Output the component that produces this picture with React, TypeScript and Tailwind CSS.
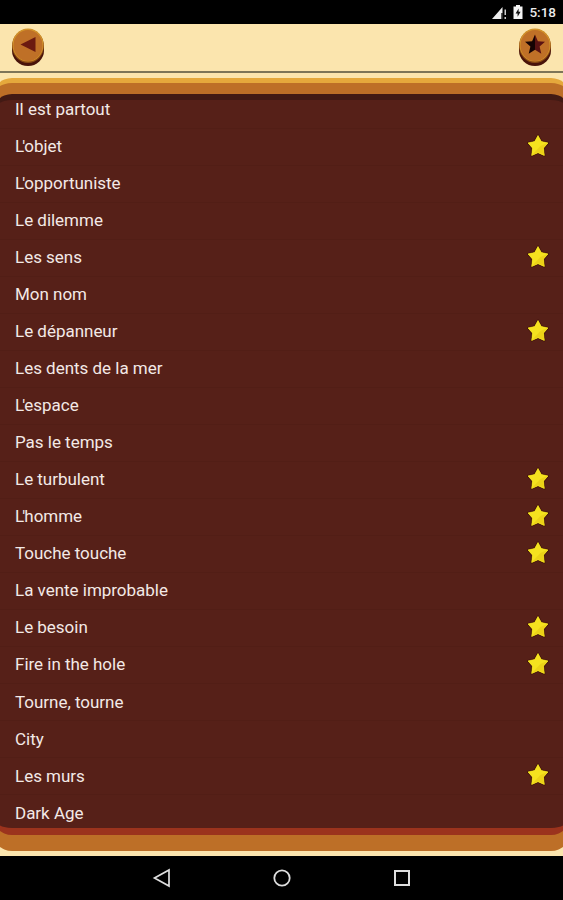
import { useState } from 'react'

type Level = { title: string; starred?: boolean }

const levels: Level[] = [
  { title: 'Il est partout' },
  { title: "L'objet", starred: true },
  { title: "L'opportuniste" },
  { title: 'Le dilemme' },
  { title: 'Les sens', starred: true },
  { title: 'Mon nom' },
  { title: 'Le dépanneur', starred: true },
  { title: 'Les dents de la mer' },
  { title: "L'espace" },
  { title: 'Pas le temps' },
  { title: 'Le turbulent', starred: true },
  { title: "L'homme", starred: true },
  { title: 'Touche touche', starred: true },
  { title: 'La vente improbable' },
  { title: 'Le besoin', starred: true },
  { title: 'Fire in the hole', starred: true },
  { title: 'Tourne, tourne' },
  { title: 'City' },
  { title: 'Les murs', starred: true },
  { title: 'Dark Age' },
]

function StatusBar() {
  return (
    <div className="flex h-[24px] shrink-0 items-center justify-end bg-black pr-[7px] text-[#ececec]">
      <svg width="15" height="13" viewBox="0 0 15 13" className="mt-[3px]">
        <path d="M10.500 0v6H9v6H0z" fill="#eee" />
        <path d="M10.500 6v6H9V6z" fill="#555" />
        <path d="M12.500 2.500H14v5.500h-1.500zM12.500 10H14v2h-1.500z" fill="#ccc" />
      </svg>
      <svg width="10" height="15" viewBox="0 0 10 15" className="ml-[6px]">
        <path d="M3 0h4v1.500h2.500V14H.5V1.500H3z" fill="#f4f4f4" />
        <path d="M5.600 3.500 2.600 8.400h2v3.300l3-5h-2z" fill="#111" />
      </svg>
      <span className="mt-[2px] ml-[6px] text-[13.5px] leading-none font-medium">5:18</span>
    </div>
  )
}

function CoinButton({ icon, onClick }: { icon: 'back' | 'star'; onClick?: () => void }) {
  return (
    <button onClick={onClick} aria-label={icon} className="h-[39px] w-[34px]">
      <svg width="34" height="39" viewBox="0 0 34 39">
        <path d="M1 17v5.500a16 15.500 0 0 0 32 0V17z" fill="#491309" />
        <ellipse cx="17" cy="18" rx="16" ry="17" fill="#8b4a14" />
        <ellipse cx="17" cy="17" rx="15.500" ry="16.500" fill="#d3932a" />
        <ellipse cx="17" cy="17.500" rx="14.500" ry="15.500" fill="#bf7027" />
        {icon === 'back' ? (
          <path d="M9.500 16.500 24.500 9v15z" fill="#6b1a10" />
        ) : (
          <>
            <path d="m17 6.500 2.900 6.700 7.100.6-5.400 4.700 1.700 7.200-6.300-3.900z" fill="#5a1212" />
            <path d="m17 6.500-2.900 6.700-7.100.6 5.400 4.700-1.700 7.200 6.300-3.900z" fill="#160303" />
          </>
        )}
      </svg>
    </button>
  )
}

function YellowStar() {
  return (
    <svg width="24" height="24" viewBox="0 0 24 24" className="-mt-[2px]">
      <path
        d="m12 1.500 3.300 6 6.700 1.400-4.500 5.200.8 7.400-6.300-2.800-6.300 2.800.8-7.400L2 8.900l6.700-1.400z"
        fill="#f5e21f"
        stroke="#3c0d08"
        strokeWidth="2"
        strokeLinejoin="round"
        paintOrder="stroke"
      />
      <path
        d="m12 1.500 3.300 6 6.700 1.400-4.500 5.200.8 7.400-6.300-2.800-6.300 2.800.8-7.400L2 8.900l6.700-1.400z"
        fill="#f5e21f"
        stroke="#f5e21f"
        strokeWidth="0.600"
        strokeLinejoin="round"
      />
      <path d="m6 21 6.200-2.800 6 2.800-.8-7 4-5-7 3z" fill="#e6c814" opacity="0.6" />
    </svg>
  )
}

// Pulls the apostrophe in close to the elided article
function Title({ text }: { text: string }) {
  if (!text.startsWith("L'")) return <span>{text}</span>
  return (
    <span>
      <span className="tracking-[-2px]">L</span>
      <span className="tracking-[-0.8px]">'</span>
      {text.slice(2)}
    </span>
  )
}

function NavBar() {
  return (
    <div className="flex h-[44px] shrink-0 items-center justify-center gap-[100px] bg-black">
      <svg width="20" height="20" viewBox="0 0 20 20" fill="none" stroke="#dedede" strokeWidth="1.700">
        <path d="M2.500 10 17 2v16z" />
      </svg>
      <svg width="20" height="20" viewBox="0 0 20 20" fill="none" stroke="#dedede" strokeWidth="1.800">
        <circle cx="10" cy="10" r="7.700" />
      </svg>
      <svg width="20" height="20" viewBox="0 0 20 20" fill="none" stroke="#dedede" strokeWidth="2">
        <path d="M3 3h14v14H3z" />
      </svg>
    </div>
  )
}

export default function App() {
  const [onlyStarred, setOnlyStarred] = useState(false)
  const shown = onlyStarred ? levels.filter(level => level.starred) : levels

  return (
    <div className="flex h-[900px] w-[563px] flex-col overflow-hidden bg-[#fbe5ae] font-['Roboto',sans-serif]">
      <StatusBar />
      <header className="flex h-[49px] shrink-0 items-start justify-between border-b-2 border-[#7d7558] px-[11px] pt-[4px]">
        <CoinButton icon="back" />
        <CoinButton icon="star" onClick={() => setOnlyStarred(value => !value)} />
      </header>

      <main className="-mx-2 mt-[5px] mb-[5px] flex min-h-0 flex-1 flex-col rounded-[20px] border-t-[5px] border-[#e5a83c] bg-[#bd6f27] pt-[11px] pb-[16px]">
        <div className="min-h-0 flex-1 overflow-hidden rounded-[20px] border-t-[6px] border-b-[7px] border-t-[#421a14] border-b-[#9b331d] bg-[#562018]">
          <ul className="-mt-[8px] px-2">
            {shown.map(level => (
              <li
                key={level.title}
                className="flex h-[37.030px] items-center justify-between border-b border-[#521e16] pr-[13px] pl-[15px] text-[17px] tracking-[-0.02px] text-[#f3e9e6]"
              >
                <Title text={level.title} />
                {level.starred && <YellowStar />}
              </li>
            ))}
          </ul>
        </div>
      </main>
      <NavBar />
    </div>
  )
}
